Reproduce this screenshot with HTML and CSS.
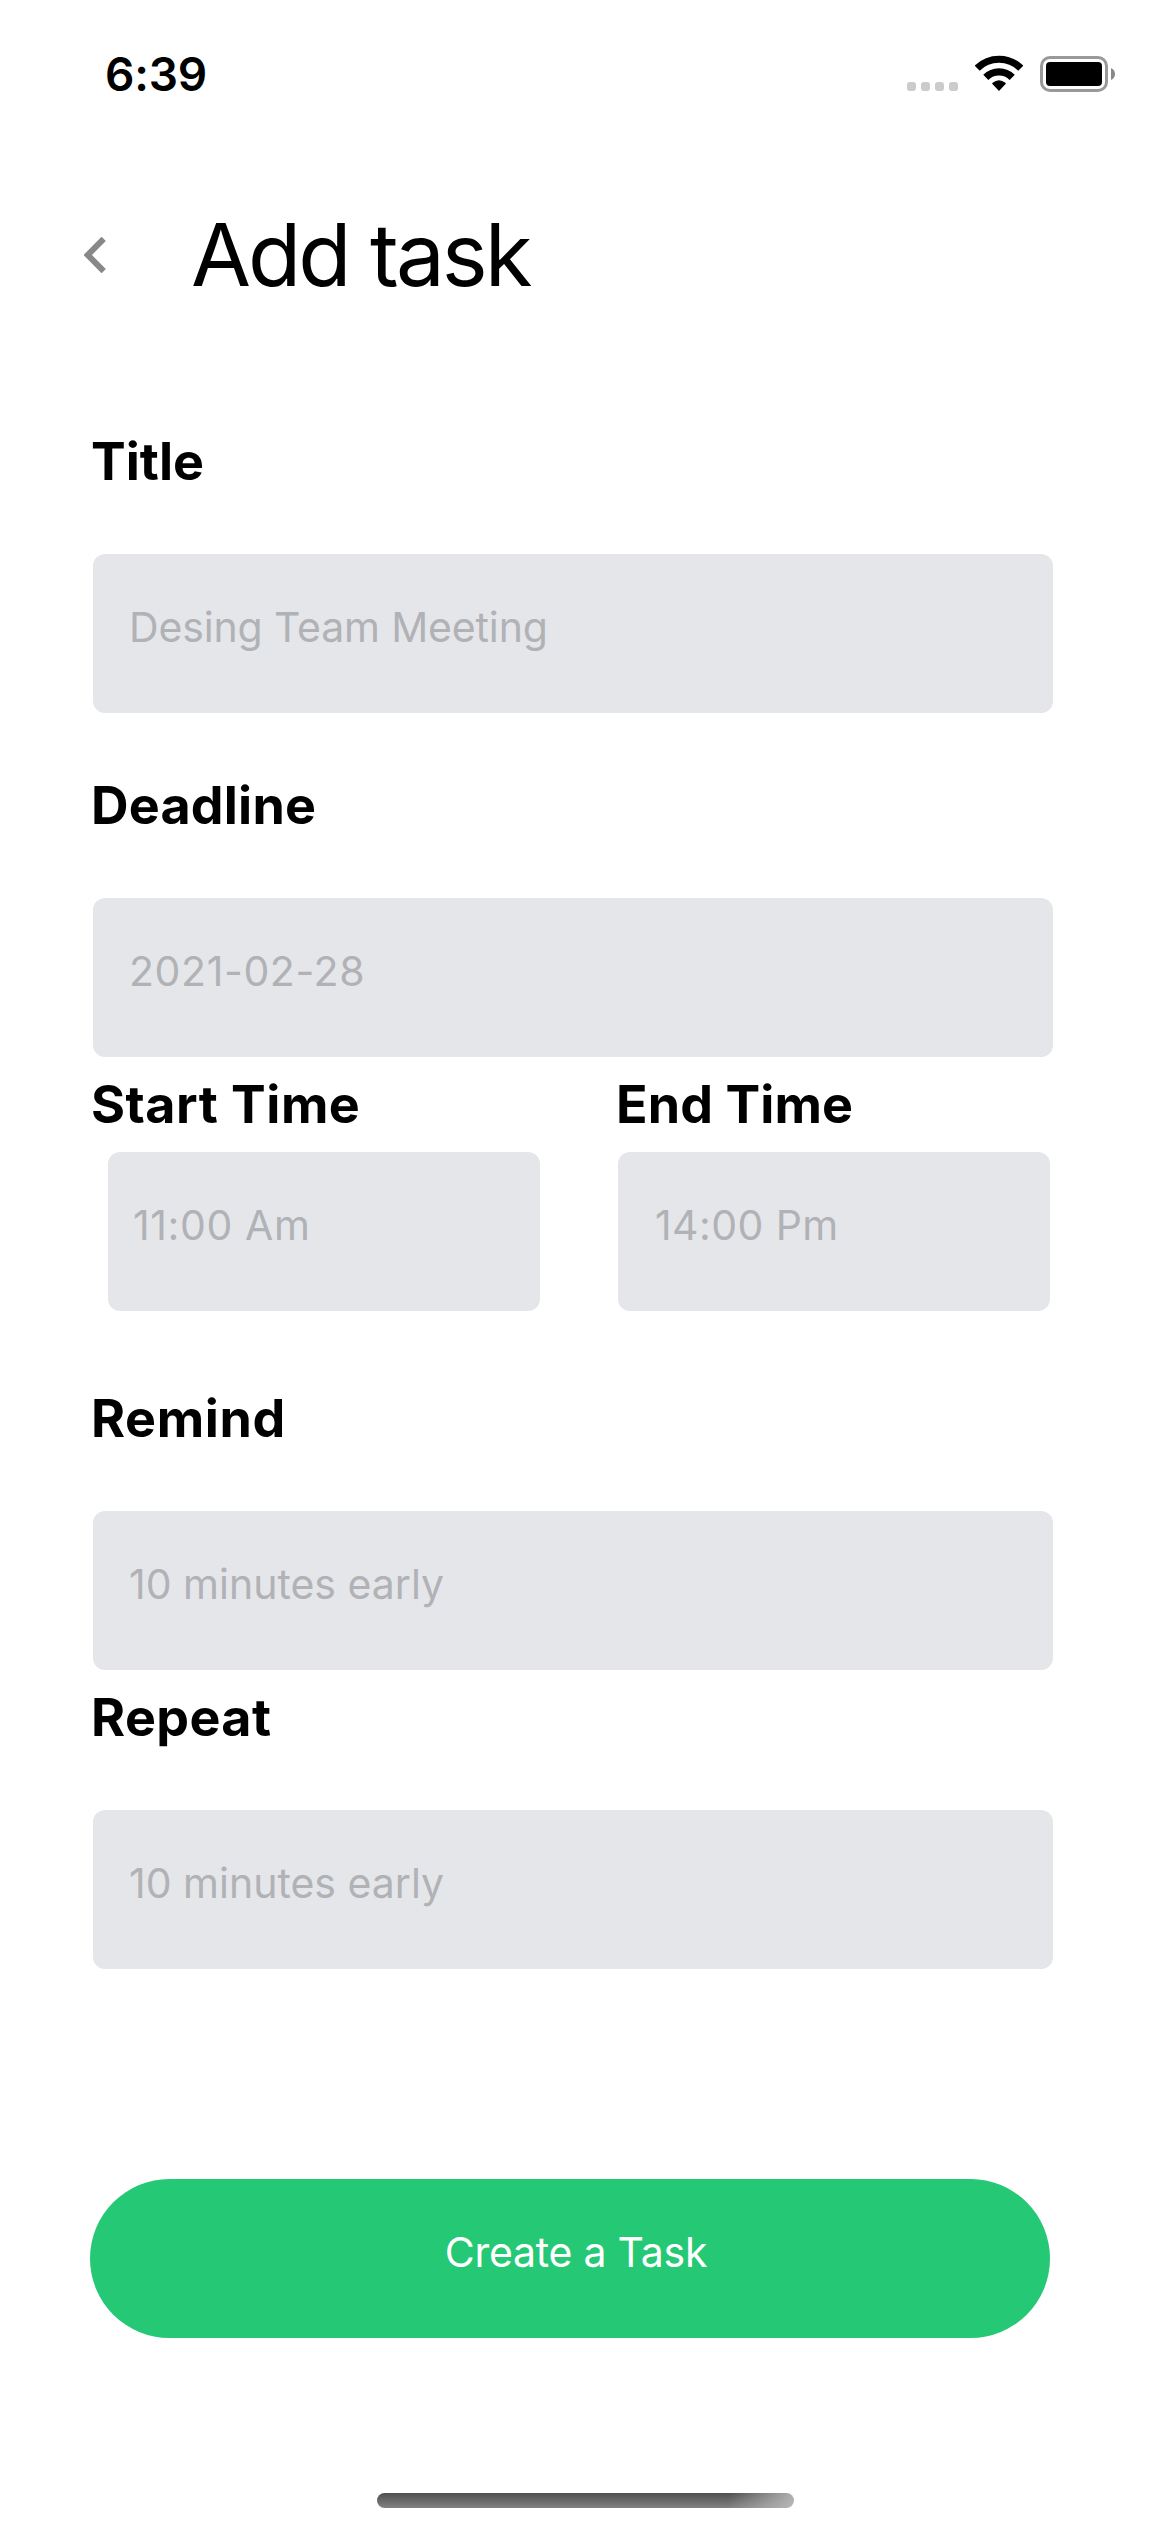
FILE: index.html
```html
<!DOCTYPE html>
<html lang="en">
<head>
<meta charset="utf-8">
<title>Add task</title>
<link rel="stylesheet" href="styles.css">
</head>
<body>
<div class="status-bar">
  <span class="clock">6:39</span>
  <div class="status-icons">
    <svg class="signal" width="51" height="9" viewBox="0 0 51 9">
      <rect width="9" height="9" rx="3"/><rect x="14" width="9" height="9" rx="3"/><rect x="28" width="9" height="9" rx="3"/><rect x="42" width="9" height="9" rx="3"/>
    </svg>
    <svg class="wifi" width="48" height="36" viewBox="0 0 48 36">
      <path class="arc" d="M2.2 13.2A31 31 0 0 1 45.8 13.2"/>
      <path class="arc" d="M10.8 22.4A18.6 18.6 0 0 1 37.2 22.4"/>
      <path d="M24 36L17.4 29.1Q16.8 28.4 17.6 27.8Q24 22.6 30.4 27.8Q31.2 28.4 30.6 29.1Z"/>
    </svg>
    <svg class="battery" width="75" height="36" viewBox="0 0 75 36">
      <rect class="shell" x="1.5" y="1.5" width="65" height="33" rx="8.5"/>
      <rect x="6" y="6" width="56" height="24" rx="4"/>
      <path class="tip" d="M71 12Q75 14 75 18T71 24Z"/>
    </svg>
  </div>
</div>

<header class="header">
  <svg class="back" width="22" height="36" viewBox="0 0 22 36"><path d="M19.7 1.8L3.7 18L19.7 34.2"/></svg>
  <h1 class="page-title">Add task</h1>
</header>

<form class="form">
  <div class="group">
    <label class="label" for="title">Title</label>
    <input class="field" id="title" placeholder="Desing Team Meeting">
  </div>
  <div class="group group-deadline">
    <label class="label label-deadline" for="deadline">Deadline</label>
    <input class="field field-date" id="deadline" placeholder="2021-02-28">
  </div>
  <div class="times">
    <div class="group group-time">
      <label class="label label-start" for="start">Start Time</label>
      <input class="field field-start" id="start" placeholder="11:00 Am">
    </div>
    <div class="group group-time">
      <label class="label label-end" for="end">End Time</label>
      <input class="field field-end" id="end" placeholder="14:00 Pm">
    </div>
  </div>
  <div class="group group-remind">
    <label class="label label-remind" for="remind">Remind</label>
    <input class="field field-minutes" id="remind" placeholder="10 minutes early">
  </div>
  <div class="group group-repeat">
    <label class="label label-repeat" for="repeat">Repeat</label>
    <input class="field field-minutes" id="repeat" placeholder="10 minutes early">
  </div>
  <button class="submit" type="button">Create a Task</button>
</form>

<div class="home-indicator"></div>
</body>
</html>
```
FILE: styles.css
```css
* {
  box-sizing: border-box;
}

body {
  margin: 0;
  width: 1170px;
  height: 2532px;
  display: flex;
  flex-direction: column;
  background: #fff;
  color: #000;
  font-family: Inter, "Liberation Sans", sans-serif;
}

/* Status bar */
.status-bar {
  display: flex;
  justify-content: space-between;
  padding: 46px 55px 0 105px;
}

.clock {
  font-size: 46px;
  line-height: 56px;
  font-weight: 600;
  letter-spacing: -0.2px;
}

.status-icons {
  display: flex;
  align-items: flex-start;
  padding-top: 9px;
}

.signal {
  margin: 27px 17px 0 0;
  fill: #cbcbcb;
}

.wifi {
  margin-right: 17px;
}

.wifi .arc {
  fill: none;
  stroke: #000;
  stroke-width: 7.2px;
}

.battery {
  margin-top: 1px;
}

.battery .shell {
  fill: none;
  stroke: #999;
  stroke-width: 3px;
}

.battery .tip {
  fill: #888;
}

/* Header */
.header {
  display: flex;
  align-items: center;
  gap: 85px;
  margin-top: 101px;
  padding-left: 84px;
}

.back {
  fill: none;
  stroke: #888;
  stroke-width: 6px;
}

.page-title {
  margin: 0;
  font-size: 87px;
  line-height: 104px;
  font-weight: 400;
  letter-spacing: -3px;
}

/* Form */
.form {
  display: flex;
  flex-direction: column;
  margin-top: 123px;
  padding-left: 91px;
}

.group {
  display: flex;
  flex-direction: column;
  align-items: flex-start;
  gap: 60px;
}

.group-deadline {
  margin-top: 61px;
}

.times {
  display: flex;
  margin-top: 16px;
}

.group-time {
  width: 525px;
  gap: 15px;
}

.group-remind {
  margin-top: 76px;
}

.group-repeat {
  margin-top: 16px;
}

.label {
  font-size: 52px;
  line-height: 64px;
  font-weight: 700;
}

.label-deadline {
  letter-spacing: 0.2px;
}

.label-start {
  letter-spacing: 0.5px;
}

.label-end {
  letter-spacing: 0.1px;
}

.label-remind {
  letter-spacing: 0.6px;
}

.label-repeat {
  letter-spacing: 0.4px;
}

.field {
  width: 960px;
  height: 159px;
  margin: 0 0 0 2px;
  padding: 48px 36px 61px;
  border: 0;
  border-radius: 12px;
  background: #e5e6ea;
  font: 400 41px/50px Inter, "Liberation Sans", sans-serif;
  letter-spacing: -0.15px;
}

.field::placeholder {
  color: #b1b2b6;
  opacity: 1;
}

.field-date {
  letter-spacing: 0.6px;
}

.field-minutes {
  letter-spacing: 0;
}

.field-start {
  width: 432px;
  margin-left: 17px;
  padding-left: 25px;
  letter-spacing: 0.6px;
}

.field-end {
  width: 432px;
  padding-left: 37px;
  letter-spacing: 0.4px;
}

.submit {
  width: 960px;
  height: 159px;
  margin: 210px 0 0 -1px;
  padding: 48px 0 61px 12px;
  border: 0;
  border-radius: 80px;
  background: #25c875;
  color: #fff;
  font: 400 41px/50px Inter, "Liberation Sans", sans-serif;
  letter-spacing: -0.26px;
}

.home-indicator {
  width: 417px;
  height: 15px;
  margin: auto 0 24px 377px;
  border-radius: 8px;
  background:
    linear-gradient(100deg, rgba(190, 190, 190, 0) 84%, rgba(190, 190, 190, 0.9) 100%),
    linear-gradient(#4f4f4f, #828282);
}
```
